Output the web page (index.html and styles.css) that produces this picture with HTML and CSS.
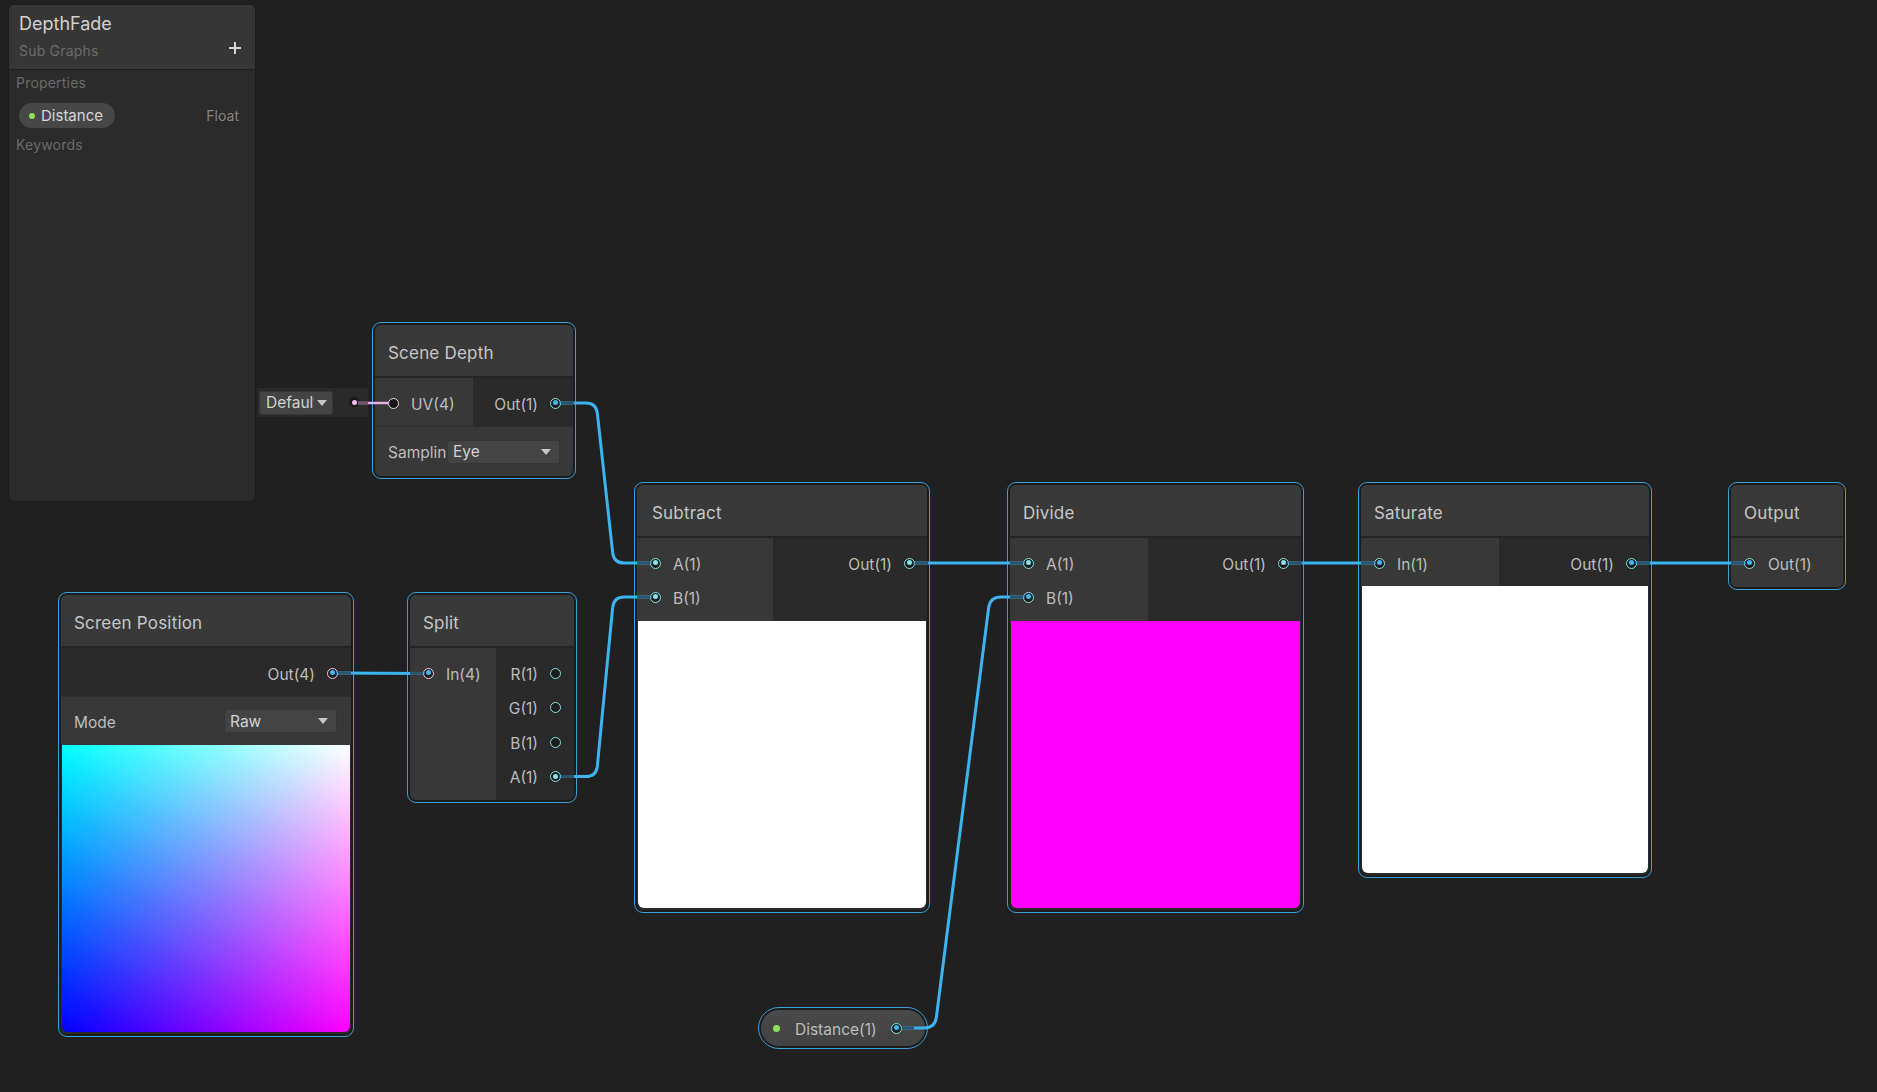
FILE: index.html
```html
<!DOCTYPE html>
<html>
<head>
<meta charset="utf-8">
<link rel="stylesheet" href="styles.css">
</head>
<body>
<div class="canvas">

  <div class="blackboard">
    <div class="bb-header">
      <div class="bb-title">DepthFade</div>
      <div class="bb-sub">Sub Graphs</div>
      <div class="bb-plus"></div>
    </div>
    <div class="bb-body">
      <div class="bb-label">Properties</div>
      <div class="bb-prop">
        <div class="pill"><span class="gdot"></span><span>Distance</span></div>
        <span class="bb-type">Float</span>
      </div>
      <div class="bb-label kw">Keywords</div>
    </div>
  </div>

  <div class="inline-default">
    <div class="dd dd-default"><span class="dd-text clip">Default</span><span class="arrow"></span></div>
    <span class="pdot"></span>
  </div>

  <!-- Scene Depth -->
  <div class="node n-scene">
    <div class="body">
      <div class="header">Scene Depth</div>
      <div class="ports">
        <div class="inputs w98">
          <div class="port in"><span class="pc pink-w"></span><span class="lbl">UV(4)</span></div>
        </div>
        <div class="outputs">
          <div class="port out"><span class="lbl">Out(1)</span><span class="pc cyan on-blue"></span></div>
        </div>
      </div>
      <div class="ctrl-row">
        <span class="ctrl-label clip-s">Sampling</span>
        <div class="dd dd-eye"><span class="dd-text">Eye</span><span class="arrow"></span></div>
      </div>
    </div>
  </div>

  <!-- Screen Position -->
  <div class="node n-screen">
    <div class="body">
      <div class="header">Screen Position</div>
      <div class="ports">
        <div class="outputs">
          <div class="port out pr13"><span class="lbl">Out(4)</span><span class="pc pink on-blue"></span></div>
        </div>
      </div>
      <div class="ctrl-row mode-row">
        <span class="ctrl-label">Mode</span>
        <div class="dd dd-raw"><span class="dd-text">Raw</span><span class="arrow"></span></div>
      </div>
      <div class="preview pv-screen"></div>
    </div>
  </div>

  <!-- Split -->
  <div class="node n-split">
    <div class="body">
      <div class="header">Split</div>
      <div class="ports split-ports">
        <div class="inputs w86">
          <div class="port in"><span class="pc pink on-blue"></span><span class="lbl">In(4)</span></div>
        </div>
        <div class="outputs">
          <div class="port out pr13"><span class="lbl">R(1)</span><span class="pc cyan"></span></div>
          <div class="port out pr13"><span class="lbl">G(1)</span><span class="pc cyan"></span></div>
          <div class="port out pr13"><span class="lbl">B(1)</span><span class="pc cyan"></span></div>
          <div class="port out pr13"><span class="lbl">A(1)</span><span class="pc cyan on-cyan"></span></div>
        </div>
      </div>
    </div>
  </div>

  <!-- Subtract -->
  <div class="node n-sub">
    <div class="body">
      <div class="header hp15">Subtract</div>
      <div class="ports two">
        <div class="inputs w136">
          <div class="port in"><span class="pc cyan on-cyan"></span><span class="lbl">A(1)</span></div>
          <div class="port in"><span class="pc cyan on-cyan"></span><span class="lbl">B(1)</span></div>
        </div>
        <div class="outputs">
          <div class="port out"><span class="lbl">Out(1)</span><span class="pc cyan on-cyan"></span></div>
        </div>
      </div>
      <div class="preview pv-white"></div>
    </div>
  </div>

  <!-- Divide -->
  <div class="node n-div">
    <div class="body">
      <div class="header">Divide</div>
      <div class="ports two">
        <div class="inputs w138">
          <div class="port in"><span class="pc cyan on-cyan"></span><span class="lbl">A(1)</span></div>
          <div class="port in"><span class="pc cyan on-blue"></span><span class="lbl">B(1)</span></div>
        </div>
        <div class="outputs">
          <div class="port out"><span class="lbl">Out(1)</span><span class="pc cyan on-cyan"></span></div>
        </div>
      </div>
      <div class="preview pv-magenta"></div>
    </div>
  </div>

  <!-- Saturate -->
  <div class="node n-sat">
    <div class="body">
      <div class="header">Saturate</div>
      <div class="ports">
        <div class="inputs w138">
          <div class="port in"><span class="pc cyan on-blue"></span><span class="lbl">In(1)</span></div>
        </div>
        <div class="outputs">
          <div class="port out"><span class="lbl">Out(1)</span><span class="pc cyan on-blue"></span></div>
        </div>
      </div>
      <div class="preview pv-white"></div>
    </div>
  </div>

  <!-- Output -->
  <div class="node n-out">
    <div class="body">
      <div class="header">Output</div>
      <div class="ports">
        <div class="inputs full">
          <div class="port in gap13"><span class="pc cyan on-blue"></span><span class="lbl">Out(1)</span></div>
        </div>
      </div>
    </div>
  </div>

  <!-- Distance property node -->
  <div class="prop-node">
    <div class="prop-inner">
      <span class="gdot big"></span>
      <span class="prop-text">Distance(1)</span>
      <span class="pc cyan on-blue"></span>
    </div>
  </div>

  <svg class="wires" width="1877" height="1092" viewBox="0 0 1877 1092">
    <g fill="none" stroke="#3cb4ef" stroke-width="3" stroke-linecap="round">
      <path d="M561 403 H586 Q596 403 597.3 413 L612.7 553 Q614 563 624 563 H650"/>
      <path d="M561 776.5 H586 Q596 776.5 597.3 766.5 L612.7 607 Q614 597 624 597 H650"/>
      <path d="M903 1028 H924 Q935 1028 936.4 1017 L988.6 608 Q990 597 1001 597 H1023"/>
      <path d="M338 673 L423 673.5"/>
      <path d="M915 563 H1023"/>
      <path d="M1289 563 H1374"/>
      <path d="M1637 563 H1744"/>
    </g>
    <g fill="none" stroke="#2e546c" stroke-width="3">
      <path d="M561 403 H574"/>
      <path d="M637 563 H650"/>
      <path d="M637 597 H650"/>
      <path d="M561 776.5 H574"/>
      <path d="M902 1028 H914"/>
      <path d="M1010 597 H1023"/>
      <path d="M338 673 H351"/>
      <path d="M410 673.4 H423"/>
      <path d="M915 563 H928"/>
      <path d="M1010 563 H1023"/>
      <path d="M1289 563 H1302"/>
      <path d="M1361 563 H1374"/>
      <path d="M1637 563 H1650"/>
      <path d="M1731 563 H1744"/>
    </g>
    <path d="M358 403 H388" fill="none" stroke="#eab2df" stroke-width="2.5"/>
    <path d="M358 403 H368" fill="none" stroke="#6d5468" stroke-width="2.5"/>
  </svg>
</div>
</body>
</html>
```

FILE: styles.css
```css
html, body {
  margin: 0;
  padding: 0;
  background: #202020;
  overflow: hidden;
}
.canvas {
  position: relative;
  width: 1877px;
  height: 1092px;
  background: #202020;
  font-family: Inter, "Noto Sans", "DejaVu Sans", sans-serif;
  color: #c2c2c2;
}

/* Blackboard */
.blackboard {
  position: absolute;
  left: 8px;
  top: 4px;
  width: 248px;
  height: 498px;
  box-sizing: border-box;
  background: #2b2b2b;
  border: 1px solid #1b1b1b;
  border-radius: 6px;
  overflow: hidden;
}
.bb-header {
  position: relative;
  height: 65px;
  background: #363636;
  border-bottom: 1px solid #1f1f1f;
  padding: 8px 0 0 10px;
  box-sizing: border-box;
}
.bb-title {
  font-size: 18px;
  line-height: 22px;
  color: #d2d2d2;
}
.bb-sub {
  margin-top: 7px;
  font-size: 14px;
  line-height: 18px;
  color: #6c6c6c;
  letter-spacing: 0.2px;
}
.bb-plus {
  position: absolute;
  left: 220px;
  top: 37px;
  width: 12px;
  height: 12px;
}
.bb-plus::before, .bb-plus::after {
  content: "";
  position: absolute;
  background: #d4d4d4;
}
.bb-plus::before { left: 0; top: 5px; width: 12px; height: 2px; }
.bb-plus::after { left: 5px; top: 0; width: 2px; height: 12px; }
.bb-body {
  padding: 4px 16px 0 7px;
}
.bb-label {
  font-size: 14px;
  line-height: 18px;
  color: #6a6a6a;
  letter-spacing: 0.2px;
}
.bb-label.kw { margin-top: 7px; }
.bb-prop {
  margin-top: 10px;
  display: flex;
  align-items: center;
  justify-content: space-between;
}
.pill {
  margin-left: 2px;
  width: 98px;
  height: 27px;
  box-sizing: border-box;
  border-radius: 14px;
  background: #474747;
  border: 1px solid #2a2a2a;
  display: flex;
  align-items: center;
  padding-left: 10px;
  gap: 6px;
  font-size: 15px;
  color: #d6d6d6;
}
.gdot {
  width: 6px;
  height: 6px;
  border-radius: 50%;
  background: #8fe25a;
  flex: none;
}
.bb-type {
  font-size: 14px;
  color: #858585;
}

/* inline default input */
.inline-default {
  position: absolute;
  left: 257px;
  top: 388px;
  width: 111px;
  height: 29px;
  background: #2a2a2a;
  display: flex;
  align-items: center;
  padding-left: 2px;
  box-sizing: border-box;
}
.pdot {
  position: absolute;
  left: 92px;
  top: 9px;
  width: 10px;
  height: 10px;
  border-radius: 50%;
  background: #191919;
}
.pdot::after {
  content: "";
  position: absolute;
  left: 2.5px;
  top: 2.5px;
  width: 5px;
  height: 5px;
  border-radius: 50%;
  background: #f4bdea;
}

/* dropdowns */
.dd {
  display: flex;
  align-items: center;
  box-sizing: border-box;
  background: #444444;
  border: 1px solid #353535;
  border-radius: 3px;
  color: #d2d2d2;
  font-size: 15px;
}
.dd-text { white-space: nowrap; }
.arrow {
  width: 0;
  height: 0;
  border-left: 5px solid transparent;
  border-right: 5px solid transparent;
  border-top: 6px solid #c8c8c8;
  flex: none;
}
.dd-default {
  width: 74px;
  height: 24px;
  padding-left: 6px;
  gap: 0;
  font-size: 15.5px;
}
.dd-default .clip {
  width: 48px;
  overflow: hidden;
}
.dd-default .arrow { margin-left: 3px; }

/* nodes */
.node {
  position: absolute;
  box-sizing: border-box;
  border: 1px solid #3b9fdc;
  border-radius: 9px;
  padding: 2px;
  background: #1c1c1c;
}
.body {
  border-radius: 6px;
  overflow: hidden;
  background: #2a2a2a;
}
.header {
  height: 47px;
  padding-top: 4px;
  border-bottom: 2px solid #242424;
  background: #393939;
  display: flex;
  align-items: center;
  padding-left: 13px;
  font-size: 17px;
  color: #c6c6c6;
  letter-spacing: 0.2px;
}
.header.hp15 { padding-left: 15px; }
.ports {
  display: flex;
}
.inputs {
  background: #383838;
  padding: 8px 0 6px;
  flex: none;
}
.inputs.full { flex: 1; padding-bottom: 7px; }
.outputs {
  flex: 1;
  background: #2a2a2a;
  padding: 8px 0 6px;
}
.ports.two .inputs, .ports.two .outputs { padding-bottom: 7px; }
.split-ports .inputs, .split-ports .outputs { padding-bottom: 6px; }
.w98 { width: 98px; }
.w86 { width: 86px; }
.w136 { width: 136px; }
.w138 { width: 138px; }
.port {
  height: 34px;
  display: flex;
  align-items: center;
  font-size: 15.5px;
  color: #bdbdbd;
}
.lbl { padding-top: 2px; }
.split-ports .port { height: 34.5px; }
.port.in {
  padding-left: 13px;
  gap: 12px;
}
.port.in.gap13 { gap: 13px; }
.port.out {
  justify-content: flex-end;
  padding-right: 12px;
  gap: 12px;
}
.port.out.pr13 { padding-right: 13px; }
.pc {
  position: relative;
  width: 11px;
  height: 11px;
  box-sizing: border-box;
  border-radius: 50%;
  border: 1.5px solid #84e4e7;
  background: #1d1d1d;
  flex: none;
}
.pc.pink { border-color: #f6c6ee; }
.pc.pink-w { border-color: #f2d6ec; background: #151515; }
.pc.on-cyan::after, .pc.on-blue::after {
  content: "";
  position: absolute;
  left: 1.5px;
  top: 1.5px;
  width: 5px;
  height: 5px;
  border-radius: 50%;
  background: #84e4e7;
}
.pc.on-blue::after { background: #3db6f2; }

.ctrl-row {
  height: 49px;
  border-top: 1px solid #2f2f2f;
  background: #383838;
  display: flex;
  align-items: center;
  padding-left: 13px;
  font-size: 15.5px;
  color: #bdbdbd;
}
.ctrl-label { padding-top: 2px; }
.clip-s {
  width: 59px;
  overflow: hidden;
  white-space: nowrap;
  flex: none;
}
.dd-eye {
  width: 113px;
  height: 24px;
  padding: 0 8px 0 5px;
  justify-content: space-between;
  font-size: 15.5px;
}
.mode-row { height: 48px; justify-content: space-between; padding-right: 14px; }
.dd-raw {
  width: 113px;
  height: 24px;
  padding: 0 8px 0 5px;
  justify-content: space-between;
  font-size: 15.5px;
}

.preview {
  height: 287px;
  margin: 0 1px 2px;
  border-radius: 0 0 6px 6px;
}
.pv-white { background: #ffffff; }
.pv-magenta { background: #ff00ff; }
.pv-screen {
  background-image: linear-gradient(to right, #0000ff, #ff00ff), linear-gradient(to bottom, #00ff00, #000000);
  background-blend-mode: screen;
}

.n-scene { left: 372px; top: 322px; width: 204px; height: 157px; }
.n-screen { left: 58px; top: 592px; width: 296px; height: 445px; }
.n-split { left: 407px; top: 592px; width: 170px; height: 211px; }
.n-sub { left: 634px; top: 482px; width: 296px; height: 431px; }
.n-div { left: 1007px; top: 482px; width: 297px; height: 431px; }
.n-sat { left: 1358px; top: 482px; width: 294px; height: 396px; }
.n-out { left: 1728px; top: 482px; width: 118px; height: 108px; }
.n-split .body, .n-out .body, .n-scene .body { height: 100%; }
.n-split .body { display: flex; flex-direction: column; }
.n-split .split-ports { flex: 1; }
.n-out .body { display: flex; flex-direction: column; background: #383838; }
.n-scene .body { background: #383838; }

.prop-node {
  position: absolute;
  left: 758px;
  top: 1007px;
  width: 170px;
  height: 42px;
  box-sizing: border-box;
  border: 1px solid #3b9fdc;
  border-radius: 21px;
  padding: 2px;
  background: #1c1c1c;
}
.prop-inner {
  height: 100%;
  border-radius: 18px;
  background: linear-gradient(#4a4a4a, #424242);
  display: flex;
  align-items: center;
  padding-left: 12px;
  box-sizing: border-box;
}
.gdot.big { width: 7px; height: 7px; }
.prop-text {
  margin-left: 15px;
  padding-top: 2px;
  font-size: 15.5px;
  color: #bcbcbc;
  width: 96px;
}
.wires {
  position: absolute;
  left: 0;
  top: 0;
  pointer-events: none;
}
```
